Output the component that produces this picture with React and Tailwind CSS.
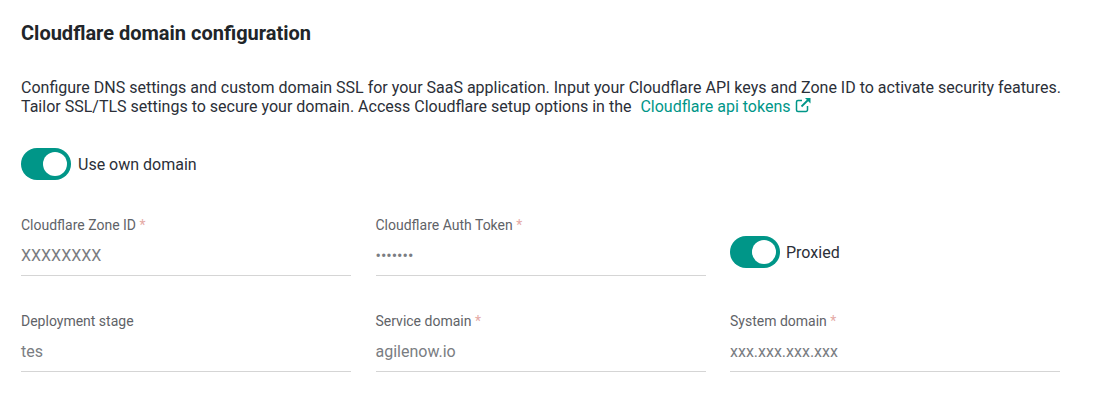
import React from "react";

function Toggle({ label, gap }) {
  return (
    <div className={`flex items-center ${gap}`}>
      <div className="flex h-8 w-[50px] items-center justify-end rounded-full bg-[#009688] pr-1">
        <div className="h-6 w-6 rounded-full bg-white" />
      </div>
      <span className="pt-[2px] text-[16px] text-[#2b2f38]">{label}</span>
    </div>
  );
}

function Field({ label, value, required }) {
  return (
    <div className="flex flex-col">
      <div className="h-[20px] text-[14px] leading-[20px] text-[#5f6368]">
        {label}
        {required && <span className="text-[#e5aaa6]"> *</span>}
      </div>
      <div className="flex h-[41px] items-center border-b border-[#d5d5d5] pt-[2px] text-[16px] text-[#7a7d82]">
        {value}
      </div>
    </div>
  );
}

function ExternalIcon() {
  return (
    <svg width="16" height="16" viewBox="0 0 16 16" fill="none" className="ml-1 inline-block align-[-1px]">
      <path d="M12.5 9v4a1.5 1.5 0 0 1-1.5 1.5H3A1.5 1.5 0 0 1 1.5 13V5A1.5 1.5 0 0 1 3 3.5h4" stroke="#009688" strokeWidth="1.5" />
      <path d="M6.5 9.5 13.5 2.5" stroke="#009688" strokeWidth="1.8" />
      <path d="M10 1h5.5v5.5z" fill="#009688" />
    </svg>
  );
}

export default function App() {
  return (
    <div className="h-[404px] w-[1095px] bg-white pl-[21px] pr-[21px] pt-[21px] font-['Roboto',sans-serif]">
      <h2 className="text-[20px] font-bold leading-[24px] text-[#212529]">Cloudflare domain configuration</h2>
      <p className="mt-[33px] text-[16px] leading-[19px] text-[#2b2f38]">
        Configure DNS settings and custom domain SSL for your SaaS application. Input your Cloudflare API keys and Zone ID to activate security features.
        <br />
        Tailor SSL/TLS settings to secure your domain. Access Cloudflare setup options in the
        <a className="ml-[9px] text-[#009688]">
          Cloudflare api tokens
          <ExternalIcon />
        </a>
      </p>
      <div className="mt-[32px]">
        <Toggle label="Use own domain" gap="gap-[7px]" />
      </div>
      <div className="mt-[35px] grid w-[1039px] grid-cols-3 gap-x-[24.5px] gap-y-[35px]">
        <Field label="Cloudflare Zone ID" value="XXXXXXXX" required />
        <Field label="Cloudflare Auth Token" value="•••••••" required />
        <div className="flex items-center pt-[12px]">
          <Toggle label="Proxied" gap="gap-[6px]" />
        </div>
        <Field label="Deployment stage" value="tes" />
        <Field label="Service domain" value="agilenow.io" required />
        <Field label="System domain" value="xxx.xxx.xxx.xxx" required />
      </div>
    </div>
  );
}
